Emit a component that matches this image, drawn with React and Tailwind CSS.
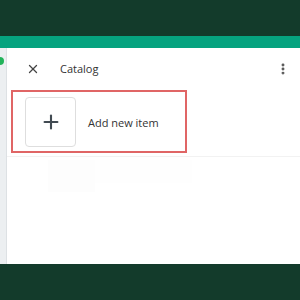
import { X, Plus, EllipsisVertical } from "lucide-react";

export default function App() {
    return (
        <div className="w-[300px] h-[300px] overflow-hidden flex flex-col bg-[#133b2b] font-['Open_Sans',sans-serif]">
            {/* top bars */}
            <div className="h-[36px] shrink-0 bg-[#133b2b]" />
            <div className="h-[12px] shrink-0 bg-[#06a37f]" />

            <div className="h-[216px] shrink-0 flex">
                {/* side strip */}
                <div className="relative w-[7px] shrink-0 bg-[#eceff1] border-r border-[#dde1e4]">
                    <div className="absolute -left-[4px] top-[9px] w-[8px] h-[8px] rounded-full bg-[#22b35a]" />
                </div>

                {/* panel */}
                <div className="flex-1 bg-white flex flex-col">
                    <div className="h-[42px] flex items-center pl-[19px] pr-[10px]">
                        <X className="w-[14px] h-[14px] text-[#444]" strokeWidth={2.2} />
                        <span className="ml-[20px] text-[11px] text-[#333]">Catalog</span>
                        <EllipsisVertical className="ml-auto w-[14px] h-[14px] text-[#555]" strokeWidth={3} />
                    </div>

                    <div className="ml-[4px] w-[176px] h-[63px] border-2 border-[#e06565] flex items-center pl-[12px]">
                        <div className="w-[51px] h-[50px] rounded-[4px] border border-[#dedede] flex items-center justify-center">
                            <Plus className="w-[22px] h-[22px] text-[#414a52]" strokeWidth={2.3} />
                        </div>
                        <span className="ml-[12px] mt-[4px] text-[11px] text-[#333]">Add new item</span>
                    </div>

                    <div className="mt-[3px] border-t border-[#f2f2f2]" />
                    <div className="flex ml-[41px] mt-[3px]">
                        <div className="w-[47px] h-[32px] bg-[#fdfdfd]" />
                        <div className="w-[97px] h-[23px] bg-[#fefefe]" />
                    </div>
                </div>
            </div>

            <div className="flex-1 bg-[#133b2b]" />
        </div>
    );
}
